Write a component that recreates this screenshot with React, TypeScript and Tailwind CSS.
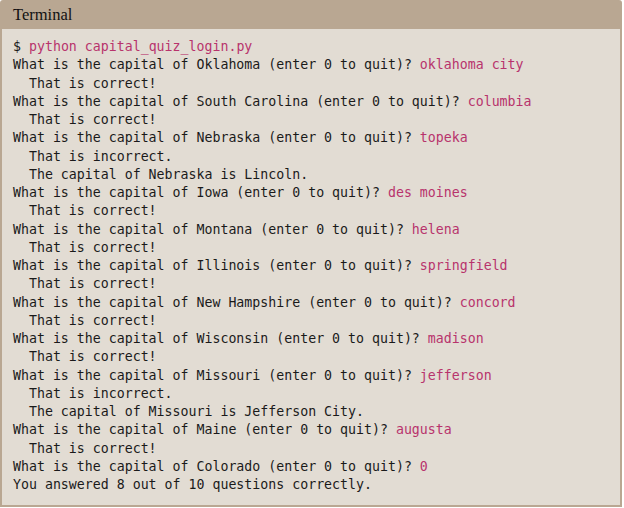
import React from "react";

type Seg = { t: string; c?: boolean };
const lines: Seg[][] = [];
const q = (state: string, ans: string, ok: boolean, capital?: string) => {
  lines.push([{ t: `What is the capital of ${state} (enter 0 to quit)? ` }, { t: ans, c: true }]);
  if (ok) lines.push([{ t: "  That is correct!" }]);
  else {
    lines.push([{ t: "  That is incorrect." }]);
    lines.push([{ t: `  The capital of ${state} is ${capital}.` }]);
  }
};
lines.push([{ t: "$ " }, { t: "python capital_quiz_login.py", c: true }]);
q("Oklahoma", "oklahoma city", true);
q("South Carolina", "columbia", true);
q("Nebraska", "topeka", false, "Lincoln");
q("Iowa", "des moines", true);
q("Montana", "helena", true);
q("Illinois", "springfield", true);
q("New Hampshire", "concord", true);
q("Wisconsin", "madison", true);
q("Missouri", "jefferson", false, "Jefferson City");
q("Maine", "augusta", true);
lines.push([{ t: "What is the capital of Colorado (enter 0 to quit)? " }, { t: "0", c: true }]);
lines.push([{ t: "You answered 8 out of 10 questions correctly." }]);

export default function App() {
  return (
    <div className="w-[624px] h-[508px] bg-white">
      <div className="w-[622px] h-[507px] bg-[#b9a792] rounded-t-[3px] flex flex-col">
        <div className="h-[29px] flex items-center px-[13px] pt-[1px] text-[16.5px] text-[#111] [font-family:'Liberation_Serif',serif]">
          Terminal
        </div>
        <div className="flex-1 mx-[2px] mb-[2px] bg-[#e2dcd3] pt-[9px] px-[11px] text-[13.25px] leading-[18.25px] text-[#1a1a1a] [font-family:'DejaVu_Sans_Mono',monospace] whitespace-pre">
          {lines.map((l, i) => (
            <div key={i}>
              {l.map((s, j) => (
                <span key={j} className={s.c ? "text-[#b8336c]" : ""}>
                  {s.t}
                </span>
              ))}
            </div>
          ))}
        </div>
      </div>
    </div>
  );
}
